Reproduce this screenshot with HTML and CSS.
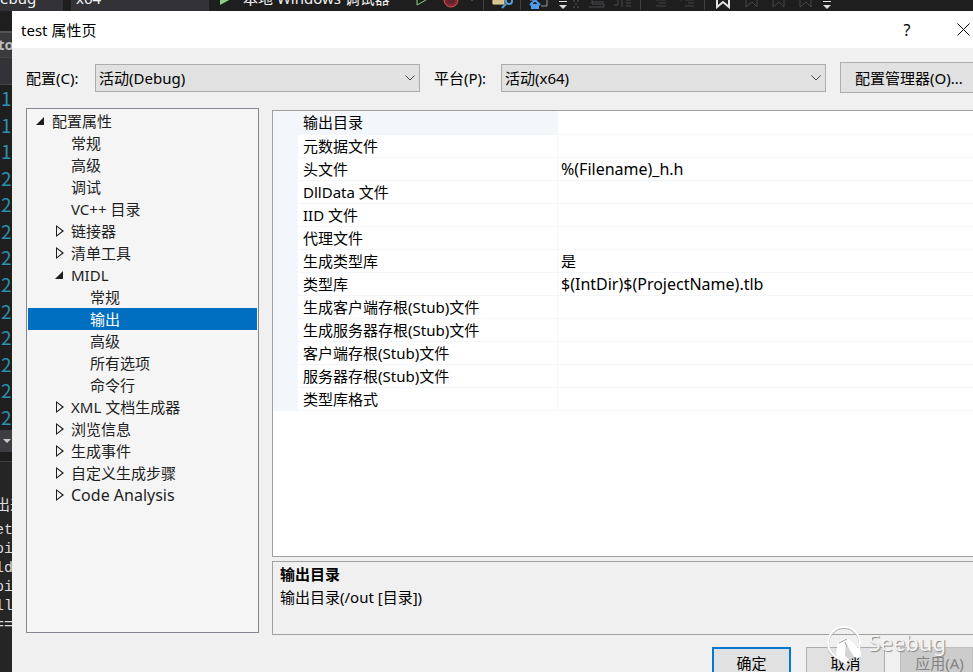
FILE: index.html
```html
<!DOCTYPE html>
<html lang="zh-CN">
<head>
    <meta charset="UTF-8">
    <meta name="viewport" content="width=device-width, initial-scale=1.0">
    <title>test 属性页</title>
    <link rel="stylesheet" href="styles.css">
</head>
<body>
    <div class="toolbar">
        <span class="tool-select tool-config">ebug<i class="dot"></i></span>
        <span class="tool-select tool-platform">x64<i class="dot"></i></span>
        <svg class="icon play" width="12" height="11" viewBox="0 0 12 11"><path d="M1 -7L12 -1L1 5Z" fill="#89d185"/></svg>
        <span class="tool-debugger">本地 Windows 调试器</span>
        <svg class="icon" width="565" height="11" viewBox="0 0 565 11" fill="none">
            <path d="M2 -2V5L11 0" stroke="#89d185"/>
            <circle cx="36" cy="0" r="7" fill="#7c2b31" stroke="#e04c58"/>
            <circle cx="36" cy="0" r="4" fill="#5e2429"/>
            <path d="M-13 0h2M56 0h2" stroke="#777"/>
            <path d="M68.500 0V10M105.500 0V10M225.500 0V10M289.500 0V10" stroke="#3f3f42"/>
            <path d="M78 -2V4H89V-2" fill="#d6c28c" stroke="#ecd79a"/>
            <path d="M87 8L91 4" stroke="#569cd6" stroke-width="2"/>
            <circle cx="94" cy="1" r="3" stroke="#569cd6" stroke-width="2"/>
            <path d="M115 5L120 0L125 5M117 4V8H119V5H121V8H123V4" stroke="#4f9de8" stroke-width="2"/>
            <path d="M126 6H132V-1M115 0H118" stroke="#999"/>
            <path d="M144 1.500H152" stroke="#ddd" stroke-width="1"/>
            <path d="M144 5H152L148 9Z" fill="#ddd"/>
            <path d="M158 1h2M162 1h2M160 4h2M158 7h2M162 7h2" stroke="#555" stroke-width="1"/>
            <path d="M177 2H189M174 7H189V4H177V0M199 5H203V0M207 0V7M211 0H216M211 3H216M211 6H216" stroke="#4b4b4e"/>
            <path d="M241 0H251M244 3H251M241 6H251M265 0H267M270 0H279M273 3H279M270 6H279" stroke="#444447"/>
            <path d="M302 0V7L308 2L314 7V0" stroke="#e4e4e4" stroke-width="2"/>
            <path d="M331 0V7L337 2L342 7V0M358 0V7L364 2L369 7V0M385 0V7L391 2L396 7V0" stroke="#47474a"/>
            <path d="M408 1.500H416" stroke="#ddd"/>
            <path d="M408 5H416L412 9Z" fill="#ddd"/>
        </svg>
    </div>

    <div class="workspace">
        <div class="editor">
            <div class="tab">to</div>
            <div class="nav"></div>
            <div class="line-numbers">
                <span>1</span><span>1</span><span>1</span>
                <span>2</span><span>2</span><span>2</span><span>2</span><span>2</span>
                <span>2</span><span>2</span><span>2</span><span>2</span><span>2</span>
            </div>
            <div class="zoom-bar">
                <svg width="8" height="4" viewBox="0 0 8 4"><path d="M0 0H8L4 4Z" fill="#ccc"/></svg>
            </div>
            <div class="output-head"></div>
            <div class="output">
                <p class="output-title">出来</p>
                <p>ets</p>
                <p>pit</p>
                <p>ldd</p>
                <p>pit</p>
                <p>ll.</p>
                <p>===</p>
            </div>
        </div>

        <main class="dialog">
            <header class="titlebar">
                <h1>test 属性页</h1>
                <button type="button" class="title-button" aria-label="帮助">?</button>
                <button type="button" class="title-button close" aria-label="关闭">
                    <svg width="13" height="13" viewBox="0 0 13 13"><path d="M0.500 0.500L12.500 12.500M12.500 0.500L0.500 12.500" stroke="#000"/></svg>
                </button>
            </header>

            <form class="content">
                <div class="filters">
                    <label for="config">配置(C):</label>
                    <div class="combo">
                        <select id="config"><option>活动(Debug)</option></select>
                        <svg width="10" height="6" viewBox="0 0 10 6"><path d="M0.500 0.500L5 5L9.500 0.500" fill="none" stroke="#444"/></svg>
                    </div>
                    <label for="platform" class="platform-label">平台(P):</label>
                    <div class="combo">
                        <select id="platform"><option>活动(x64)</option></select>
                        <svg width="10" height="6" viewBox="0 0 10 6"><path d="M0.500 0.500L5 5L9.500 0.500" fill="none" stroke="#444"/></svg>
                    </div>
                    <button type="button" class="manager">配置管理器(O)...</button>
                </div>

                <div class="panes">
                    <ul class="tree">
                        <li class="open">配置属性</li>
                        <li class="level-1">常规</li>
                        <li class="level-1">高级</li>
                        <li class="level-1">调试</li>
                        <li class="level-1">VC++ 目录</li>
                        <li class="level-1 closed">链接器</li>
                        <li class="level-1 closed">清单工具</li>
                        <li class="level-1 open">MIDL</li>
                        <li class="level-2">常规</li>
                        <li class="level-2 selected">输出</li>
                        <li class="level-2">高级</li>
                        <li class="level-2">所有选项</li>
                        <li class="level-2">命令行</li>
                        <li class="level-1 closed">XML 文档生成器</li>
                        <li class="level-1 closed">浏览信息</li>
                        <li class="level-1 closed">生成事件</li>
                        <li class="level-1 closed">自定义生成步骤</li>
                        <li class="level-1 closed latin">Code Analysis</li>
                    </ul>

                    <div class="details">
                        <div class="properties">
                            <table>
                                <tr class="current"><th>输出目录</th><td></td></tr>
                                <tr><th>元数据文件</th><td></td></tr>
                                <tr><th>头文件</th><td class="latin">%(Filename)_h.h</td></tr>
                                <tr><th>DllData 文件</th><td></td></tr>
                                <tr><th>IID 文件</th><td></td></tr>
                                <tr><th>代理文件</th><td></td></tr>
                                <tr><th>生成类型库</th><td>是</td></tr>
                                <tr><th>类型库</th><td class="latin">$(IntDir)$(ProjectName).tlb</td></tr>
                                <tr><th>生成客户端存根(Stub)文件</th><td></td></tr>
                                <tr><th>生成服务器存根(Stub)文件</th><td></td></tr>
                                <tr><th>客户端存根(Stub)文件</th><td></td></tr>
                                <tr><th>服务器存根(Stub)文件</th><td></td></tr>
                                <tr><th>类型库格式</th><td></td></tr>
                            </table>
                        </div>
                        <div class="description">
                            <h2>输出目录</h2>
                            <p>输出目录(/out [目录])</p>
                        </div>
                    </div>
                </div>

                <footer class="actions">
                    <button type="button" class="primary">确定</button>
                    <button type="button">取消</button>
                    <button type="button" class="apply" disabled>应用(A)</button>
                </footer>
            </form>
        </main>
    </div>

    <div class="watermark">
        <svg width="36" height="40" viewBox="0 0 36 40">
            <circle cx="17" cy="18" r="16" fill="none" stroke="#aaa" stroke-width="2"/>
            <circle cx="17" cy="17" r="16" fill="none" stroke="#fff" stroke-width="2"/>
            <path d="M11 17Q17 10 23 14L33 24Q36 29 32 32L27 31L19 18L18 30L22 33L19 38Q10 35 9 27Z" fill="#fff"/>
            <path d="M19 18L27 31L22 33L18 30Z" fill="#d4d4d4"/>
            <path d="M12 17L20 13M18 16L20 21" fill="none" stroke="#999"/>
        </svg>
        <span>Seebug</span>
    </div>
</body>
</html>
```

FILE: styles.css
```css
* {
    box-sizing: border-box;
}
body {
    display: flex;
    flex-direction: column;
    height: 100vh;
    margin: 0;
    overflow: hidden;
    background: #1e1e1e;
    color: #000;
    font-family: "Noto Sans", "Noto Sans CJK SC", sans-serif;
    font-size: 15px;
    line-height: 22px;
}
h1, h2, p, ul {
    margin: 0;
    padding: 0;
    font-size: 15px;
    font-weight: normal;
}
button, select {
    font: inherit;
    color: inherit;
}
.latin {
    font-size: 16px;
}

/* IDE behind the dialog */
.toolbar {
    display: flex;
    flex: none;
    align-items: flex-end;
    height: 11px;
    overflow: hidden;
    white-space: nowrap;
    color: #f1f1f1;
}
.toolbar .icon {
    flex: none;
}
.tool-select {
    display: flex;
    flex: none;
    align-items: center;
    justify-content: space-between;
    padding-bottom: 2px;
    background: #333337;
}
.tool-config {
    width: 63px;
}
.tool-platform {
    width: 138px;
    margin-left: 8px;
    padding-left: 5px;
}
.dot {
    width: 2px;
    height: 2px;
    margin-right: 8px;
    background: #777;
}
.toolbar .play {
    margin-left: 10px;
}
.tool-debugger {
    flex: none;
    width: 184px;
    padding: 0 0 2px 12px;
}
.workspace {
    display: flex;
    flex: 1;
    min-height: 0;
}
.editor {
    display: flex;
    flex: none;
    flex-direction: column;
    width: 12px;
    padding-top: 20px;
    overflow: hidden;
}
.tab {
    height: 26px;
    border-top: 2px solid #555;
    background: #3a3a3c;
    color: #bbb;
    font-weight: bold;
    text-indent: -2px;
}
.nav {
    height: 28px;
    border-top: 1px solid #444;
    border-bottom: 1px solid #444;
    background: #333337;
}
.line-numbers {
    display: flex;
    flex-direction: column;
    height: 345px;
    padding-left: 1px;
    color: #2b91af;
    font-family: "Noto Sans CJK SC", sans-serif;
    font-size: 19px;
}
.line-numbers span {
    display: flex;
    flex: 1;
    align-items: center;
}
.zoom-bar {
    display: flex;
    align-items: center;
    height: 22px;
    padding-left: 3px;
    background: #3e3e42;
}
.output-head {
    height: 10px;
    border-bottom: 1px solid #3f3f46;
}
.output {
    flex: 1;
    padding-top: 35px;
    background: #252526;
    color: #dcdcdc;
    font-family: "Liberation Mono", "Noto Sans CJK SC", monospace;
    line-height: 19px;
    text-indent: -5px;
    white-space: nowrap;
}
.output .output-title {
    height: 24px;
}

/* Property pages dialog */
.dialog {
    display: flex;
    flex: 1;
    flex-direction: column;
    min-width: 0;
    background: #f0f0f0;
}
.titlebar {
    display: flex;
    flex: none;
    align-items: center;
    height: 37px;
    padding-left: 9px;
    background: #fff;
}
.titlebar h1 {
    flex: 1;
}
.title-button {
    width: 52px;
    height: 37px;
    padding: 0;
    border: none;
    background: none;
    font-size: 16px;
}
.title-button.close {
    width: 40px;
    padding-left: 24px;
}
.close svg {
    display: block;
}
.content {
    display: flex;
    flex: 1;
    flex-direction: column;
    min-height: 0;
    padding: 14px 0 0 14px;
}
.filters {
    display: flex;
    flex: none;
    align-items: center;
    height: 31px;
}
.filters label {
    width: 69px;
}
.filters .platform-label {
    width: 81px;
    padding-left: 14px;
}
.combo {
    display: grid;
    flex: 1;
    align-items: center;
}
.combo select, .combo svg {
    grid-area: 1 / 1;
}
.combo select {
    width: 100%;
    height: 28px;
    padding: 0 24px 0 3px;
    border: 1px solid #adadad;
    border-radius: 0;
    background: #e1e1e1;
    appearance: none;
}
.combo svg {
    justify-self: end;
    margin-right: 5px;
    pointer-events: none;
}
.manager {
    width: 133px;
    height: 31px;
    margin-left: 14px;
    padding: 0 0 0 14px;
    border: 1px solid #adadad;
    border-right: none;
    background: #e1e1e1;
    text-align: left;
    white-space: nowrap;
}
.panes {
    display: flex;
    flex: 1;
    gap: 13px;
    min-height: 0;
    margin-top: 15px;
}
.tree {
    flex: none;
    width: 233px;
    margin-bottom: 2px;
    padding: 1px;
    border: 1px solid #828790;
    background: #f5f5f5;
    color: #1e1e1e;
    list-style: none;
}
.tree li {
    display: flex;
    align-items: center;
    height: 22px;
    padding-left: 24px;
}
.tree .level-1 {
    padding-left: 43px;
}
.tree .level-2 {
    padding-left: 62px;
}
.tree .selected {
    background: #006fc1;
    color: #fff;
}
.tree .open::before, .tree .closed::before {
    content: "";
    width: 8px;
    height: 8px;
    margin-left: -16px;
    margin-right: 8px;
    background: #1e1e1e;
    clip-path: polygon(100% 0, 100% 100%, 0 100%);
}
.tree .closed::before {
    height: 12px;
    margin-left: -15px;
    margin-right: 7px;
    clip-path: polygon(evenodd, 0 0, 8px 6px, 0 12px, 0 0, 1px 2px, 6px 6px, 1px 10px, 1px 2px);
}
.details {
    display: flex;
    flex: 1;
    flex-direction: column;
    gap: 4px;
    min-width: 0;
}
.properties {
    flex: 1;
    margin-top: 2px;
    border: 1px solid #a0a0a0;
    border-right: none;
    background: #fff;
}
table {
    width: 100%;
    border-collapse: collapse;
    table-layout: fixed;
}
tr {
    height: 23px;
}
th, td {
    height: 23px;
    padding: 0 0 0 3px;
    border-bottom: 1px solid #f3f7fc;
    line-height: 22px;
    white-space: nowrap;
}
th {
    width: 272px;
    padding-left: 5px;
    border-left: 25px solid #f3f7fc;
    border-right: 1px solid #f3f7fc;
    font-weight: normal;
    text-align: left;
}
.current th {
    background: #f3f7fc;
}
.description {
    flex: none;
    height: 74px;
    padding: 1px 7px;
    border: 1px solid #a0a0a0;
    border-right: none;
    line-height: 23px;
}
.description h2 {
    font-weight: bold;
}
.actions {
    display: flex;
    flex: none;
    gap: 15px;
    justify-content: flex-end;
    height: 25px;
    margin-top: 12px;
}
.actions button {
    width: 79px;
    height: 31px;
    padding: 0;
    border: 1px solid #adadad;
    background: #e1e1e1;
}
.actions .primary {
    border: 2px solid #0078d7;
}
.actions .apply {
    width: 73px;
    padding-left: 6px;
    border: 1px solid #bfbfbf;
    background: #ccc;
    color: #838383;
}

.watermark {
    position: absolute;
    right: 27px;
    bottom: 6px;
    display: flex;
    align-items: flex-start;
    gap: 5px;
    color: #f4f4f4;
    font-size: 22px;
    line-height: 32px;
    text-shadow: 1px 1px 1px #888;
    pointer-events: none;
}
```
